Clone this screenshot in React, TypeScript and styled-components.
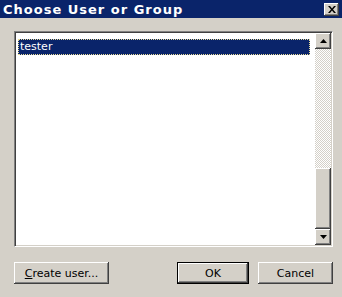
import React from 'react';
import { createGlobalStyle, styled } from 'styled-components';

const GlobalStyle = createGlobalStyle`
  html, body {
    margin: 0;
    padding: 0;
    background: #d4d0c8;
  }
`;

// 클래식 윈도우 버튼 테두리
const raised = `
  box-shadow: inset -1px -1px #404040, inset 1px 1px #ffffff, inset -2px -2px #808080, inset 2px 2px #d4d0c8;
`;

const Dialog = () => {
  return (
    <Window>
      <TitleBar>
        <Title>Choose User or Group</Title>
        <CloseButton aria-label="Close">
          <svg width="8" height="7" viewBox="0 0 8 7">
            <path d="M0 0h2l2 2.5L6 0h2L5 3.5 8 7H6L4 4.5 2 7H0l3-3.5z" fill="#000" />
          </svg>
        </CloseButton>
      </TitleBar>
      <Body>
        <ListBox>
          <Items>
            <Item selected>tester</Item>
          </Items>
          <ScrollBar>
            <ArrowButton>
              <svg width="7" height="4" viewBox="0 0 7 4">
                <path d="M3.5 0L7 4H0z" fill="#000" />
              </svg>
            </ArrowButton>
            <Track>
              <Thumb />
            </Track>
            <ArrowButton>
              <svg width="7" height="4" viewBox="0 0 7 4">
                <path d="M0 0h7L3.5 4z" fill="#000" />
              </svg>
            </ArrowButton>
          </ScrollBar>
        </ListBox>
        <ButtonRow>
          <Button width={95}>
            <u>C</u>reate user...
          </Button>
          <Spacer />
          <Button width={72} isDefault>
            OK
          </Button>
          <Button width={75}>Cancel</Button>
        </ButtonRow>
      </Body>
    </Window>
  );
};

export default function App() {
  return (
    <>
      <GlobalStyle />
      <Dialog />
    </>
  );
}

const Window = styled.div`
  width: 342px;
  height: 297px;
  display: flex;
  flex-direction: column;
  background: #d4d0c8;
  font-family: 'DejaVu Sans', Verdana, sans-serif;
  font-size: 11px;
  color: #000;
  overflow: hidden;
`;

const TitleBar = styled.div`
  height: 18px;
  background: #0a246a;
  display: flex;
  align-items: center;
  padding: 0 3px 0 3px;
`;

const Title = styled.div`
  flex: 1;
  color: #fff;
  font-weight: bold;
  font-size: 13px;
  letter-spacing: 1px;
  white-space: nowrap;
`;

const CloseButton = styled.div`
  width: 15px;
  height: 13px;
  background: #d4d0c8;
  ${raised}
  display: flex;
  align-items: center;
  justify-content: center;
  margin-top: 1px;
`;

const Body = styled.div`
  flex: 1;
  display: flex;
  flex-direction: column;
  padding: 13px 9px 13px 14px;
  gap: 15px;
`;

const ListBox = styled.div`
  height: 216px;
  box-sizing: border-box;
  background: #fff;
  border-style: solid;
  border-width: 1px;
  border-color: #808080 #ffffff #ffffff #808080;
  box-shadow: inset 1px 1px #404040, inset -1px -1px #d4d0c8;
  padding: 1px;
  display: flex;
`;

const Items = styled.div`
  flex: 1;
  padding: 6px 5px 0 2px;
`;

const Item = styled.div<{ selected?: boolean }>`
  height: 16px;
  box-sizing: border-box;
  line-height: 14px;
  padding-left: 1px;
  background: ${(p) => (p.selected ? '#0a246a' : 'transparent')};
  color: ${(p) => (p.selected ? '#fff' : '#000')};
  border: 1px dotted ${(p) => (p.selected ? '#e8dc98' : 'transparent')};
`;

const ScrollBar = styled.div`
  width: 16px;
  display: flex;
  flex-direction: column;
`;

const ArrowButton = styled.div`
  width: 16px;
  height: 16px;
  flex: none;
  background: #d4d0c8;
  ${raised}
  display: flex;
  align-items: center;
  justify-content: center;
`;

const Track = styled.div`
  flex: 1;
  display: flex;
  flex-direction: column;
  justify-content: flex-end;
  background: repeating-conic-gradient(#ffffff 0 25%, #d4d0c8 0 50%) 0 0 / 2px 2px;
`;

const Thumb = styled.div`
  height: 61px;
  background: #d4d0c8;
  ${raised}
`;

const ButtonRow = styled.div`
  display: flex;
  gap: 9px;
`;

const Spacer = styled.div`
  flex: 1;
`;

const Button = styled.div<{ width: number; isDefault?: boolean }>`
  width: ${(p) => p.width}px;
  height: 22px;
  box-sizing: border-box;
  background: #d4d0c8;
  display: flex;
  align-items: center;
  justify-content: center;
  ${(p) =>
    p.isDefault
      ? `border: 1px solid #000;
         box-shadow: inset -1px -1px #404040, inset 1px 1px #ffffff, inset -2px -2px #808080;`
      : raised}

  u {
    text-decoration: underline;
  }
`;
